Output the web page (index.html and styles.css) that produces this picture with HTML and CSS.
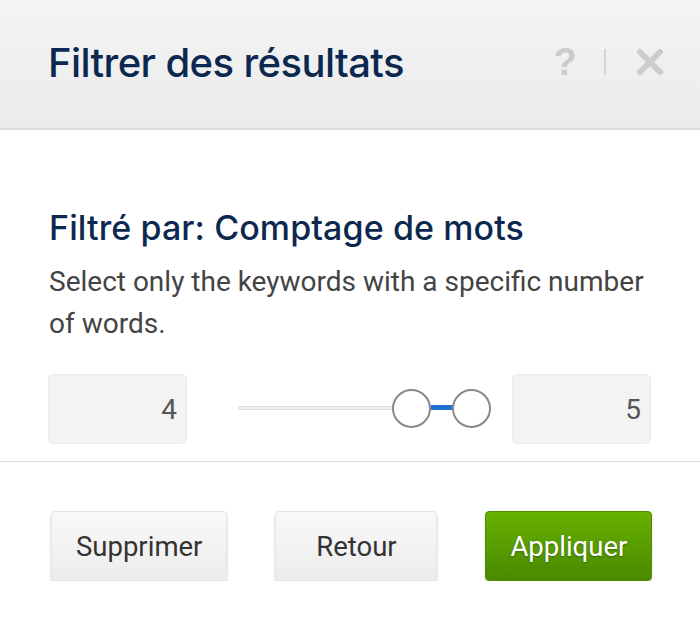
FILE: index.html
```html
<!DOCTYPE html>
<html lang="fr">
<head>
<meta charset="utf-8">
<title>Filtrer des résultats</title>
<link rel="stylesheet" href="styles.css">
</head>
<body>
<div class="dialog">
  <header class="dialog-header">
    <h1 class="dialog-title">Filtrer des résultats</h1>
    <div class="header-actions">
      <span class="help-icon">?</span>
      <span class="header-sep"></span>
      <svg class="close-icon" width="28" height="28" viewBox="0 0 28 28" aria-hidden="true">
        <path d="M4 4 L24 24 M24 4 L4 24" stroke="#cccccc" stroke-width="6" stroke-linecap="round"/>
      </svg>
    </div>
  </header>
  <section class="dialog-body">
    <h2 class="filter-title">Filtré par: Comptage de mots</h2>
    <p class="filter-desc">Select only the keywords with a specific number of words.</p>
    <div class="range-row">
      <div class="num-box">4</div>
      <div class="slider">
        <div class="track"></div>
        <div class="range" style="left:193px;width:40px"></div>
        <span class="handle handle-min"></span>
        <span class="handle handle-max"></span>
      </div>
      <div class="num-box">5</div>
    </div>
  </section>
  <footer class="dialog-footer">
    <button class="btn btn-grey btn-delete">Supprimer</button>
    <button class="btn btn-grey btn-back">Retour</button>
    <button class="btn btn-green">Appliquer</button>
  </footer>
</div>
</body>
</html>
```

FILE: styles.css
```css
html, body {
  margin: 0;
  padding: 0;
  background: #ffffff;
}
.dialog {
  width: 700px;
  font-family: Roboto, "Liberation Sans", sans-serif;
}
.dialog-header {
  height: 130px;
  box-sizing: border-box;
  background: linear-gradient(#f4f4f4, #ebebeb);
  border-bottom: 2px solid #dcdcdc;
  display: flex;
  align-items: center;
  justify-content: space-between;
  padding: 0 36px 4px 48px;
}
.dialog-title {
  margin: 0;
  font-family: Inter, sans-serif;
  font-weight: 500;
  font-size: 40px;
  color: #0c2850;
  letter-spacing: -0.6px;
}
.header-actions {
  display: flex;
  align-items: center;
}
.help-icon {
  font-family: "Liberation Sans", sans-serif;
  font-weight: 700;
  font-size: 38px;
  line-height: 1;
  color: #cccccc;
  width: 24px;
  text-align: center;
}
.header-sep {
  width: 2px;
  height: 26px;
  background: #d4d4d4;
  margin: 0 30px 0 27px;
}
.close-icon {
  display: block;
}
.dialog-body {
  padding: 76px 48px 17px 48px;
  border-bottom: 1px solid #dedede;
}
.filter-title {
  margin: 0 0 0 1px;
  font-family: Inter, sans-serif;
  font-weight: 500;
  font-size: 34px;
  color: #0c2850;
  line-height: 44px;
  letter-spacing: 0.1px;
}
.filter-desc {
  margin: 11px 0 29px 1px;
  font-size: 28px;
  line-height: 42px;
  color: #444444;
}
.range-row {
  display: flex;
  align-items: center;
}
.num-box {
  width: 139px;
  height: 70px;
  box-sizing: border-box;
  background: #f3f3f3;
  border: 1px solid #ececec;
  border-radius: 5px;
  display: flex;
  align-items: center;
  justify-content: flex-end;
  padding-right: 9px;
  font-size: 28px;
  color: #555555;
}
.slider {
  position: relative;
  width: 253px;
  height: 40px;
  margin: 0 21px 0 51px;
}
.track {
  position: absolute;
  left: 0;
  top: 17px;
  width: 233px;
  height: 4px;
  background: #eeeeee;
  border: 1px solid #dddddd;
  border-radius: 3px;
  box-sizing: border-box;
}
.range {
  position: absolute;
  top: 16px;
  height: 5px;
  background: #1f72d0;
}
.handle {
  position: absolute;
  top: 0;
  width: 39px;
  height: 39px;
  box-sizing: border-box;
  border: 2px solid #888888;
  border-radius: 50%;
  background: #ffffff;
}
.handle-min { left: 154px; }
.handle-max { left: 214px; }
.dialog-footer {
  display: flex;
  gap: 48px;
  padding: 49px 0 0 51px;
}
.btn {
  height: 70px;
  min-width: 162px;
  padding: 0 24px;
  border-radius: 4px;
  font-family: Roboto, sans-serif;
  font-size: 27.5px;
  cursor: pointer;
}
.btn-grey {
  background: linear-gradient(#f9f9f9, #ececec);
  border: 1px solid #e4e4e4;
  color: #333333;
  box-shadow: 0 2px 3px rgba(0,0,0,0.18);
}
.btn-green {
  background: linear-gradient(#67b100, #4a8900);
  border: 1px solid #4c8c00;
  color: #ffffff;
  text-shadow: 0 1px 2px rgba(0,0,0,0.35);
  box-shadow: 0 1px 2px rgba(0,0,0,0.15);
}
```
